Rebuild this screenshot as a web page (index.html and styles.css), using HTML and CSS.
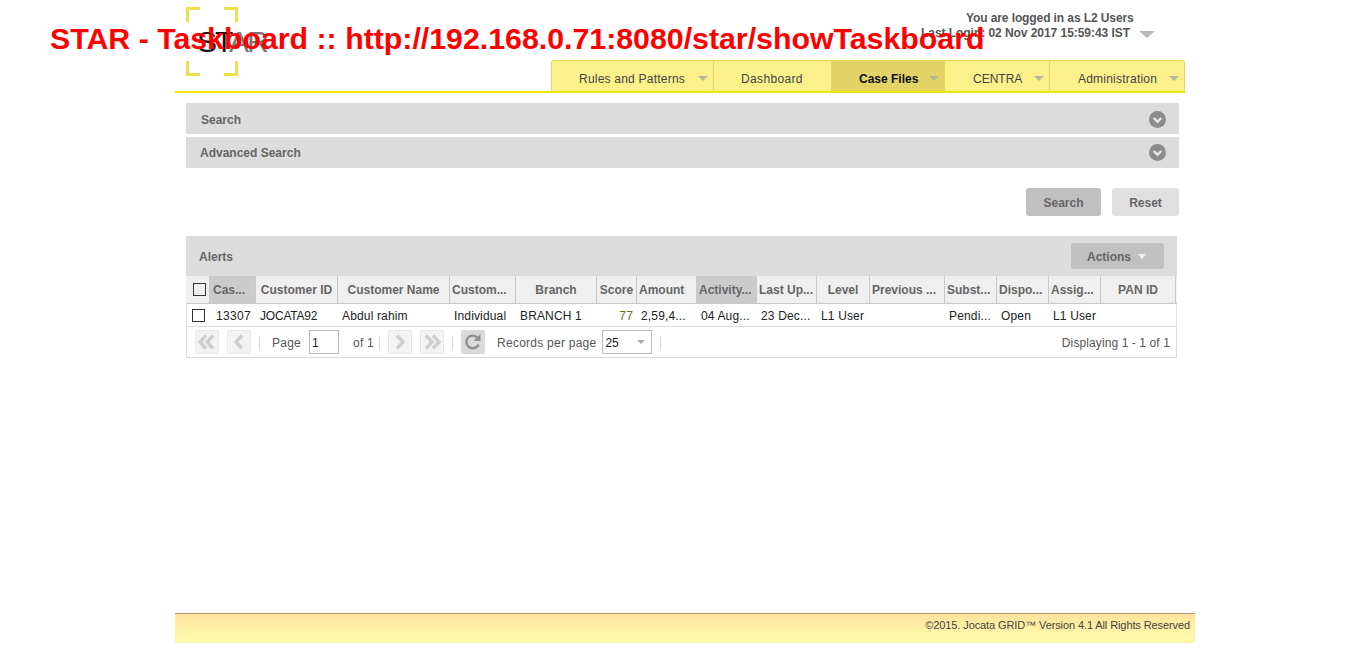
FILE: index.html
```html
<!DOCTYPE html>
<html lang="en">
<head>
<meta charset="utf-8">
<title>STAR - Taskboard</title>
<link rel="stylesheet" href="styles.css">
</head>
<body>
<div class="banner">STAR - Taskboard :: http://192.168.0.71:8080/star/showTaskboard</div>
<div class="page">
  <header class="header">
    <div class="logo">
      <svg class="logo-frame" width="52" height="69" viewBox="0 0 52 69" aria-hidden="true">
        <path d="M1.500 15V1.500H14M38 1.500H50.500V15M1.500 54V67.500H14M38 67.500H50.500V54" fill="none" stroke="#efe04f" stroke-width="3"/>
      </svg>
      <span class="logo-text"><b>ST</b>AR</span>
    </div>
    <div class="header-right">
      <div class="user">
        <div class="user-line">You are logged in as L2 Users</div>
        <div class="user-line login">Last Login: 02 Nov 2017 15:59:43 IST <i class="user-caret"></i></div>
      </div>
      <nav class="nav">
        <a class="tab t1">Rules and Patterns<i class="caret"></i></a>
        <a class="tab t2">Dashboard</a>
        <a class="tab t3 active">Case Files<i class="caret"></i></a>
        <a class="tab t4">CENTRA<i class="caret"></i></a>
        <a class="tab t5">Administration<i class="caret"></i></a>
      </nav>
    </div>
  </header>

  <main class="content">
    <section class="accordion first">
      <span class="acc-title indent">Search</span>
      <svg class="chev" width="17" height="17" viewBox="0 0 17 17" aria-hidden="true"><circle cx="8.500" cy="8.500" r="8.500" fill="#8c8c8c"/><path d="M4.800 7l3.700 3.700L12.200 7" fill="none" stroke="#e6e6e6" stroke-width="2.400"/></svg>
    </section>
    <section class="accordion second">
      <span class="acc-title">Advanced Search</span>
      <svg class="chev" width="17" height="17" viewBox="0 0 17 17" aria-hidden="true"><circle cx="8.500" cy="8.500" r="8.500" fill="#8c8c8c"/><path d="M4.800 7l3.700 3.700L12.200 7" fill="none" stroke="#e6e6e6" stroke-width="2.400"/></svg>
    </section>
    <div class="buttons">
      <button class="btn btn-dark">Search</button>
      <button class="btn btn-light">Reset</button>
    </div>

    <section class="grid-panel">
      <div class="panel-head">
        <span class="panel-title">Alerts</span>
        <button class="actions">Actions<i class="actions-caret"></i></button>
      </div>
      <div class="row head-row">
        <div class="hc chk"><span class="box"></span></div>
        <div class="hc sorted left wide">Cas...</div>
        <div class="hc">Customer ID</div>
        <div class="hc">Customer Name</div>
        <div class="hc left">Custom...</div>
        <div class="hc">Branch</div>
        <div class="hc">Score</div>
        <div class="hc left">Amount</div>
        <div class="hc sorted left">Activity...</div>
        <div class="hc left">Last Up...</div>
        <div class="hc">Level</div>
        <div class="hc left">Previous ...</div>
        <div class="hc left">Subst...</div>
        <div class="hc left">Dispo...</div>
        <div class="hc left">Assig...</div>
        <div class="hc">PAN ID</div>
      </div>
      <div class="row data-row">
        <div class="dc chk"><span class="box"></span></div>
        <div class="dc first-cell">13307</div>
        <div class="dc tight">JOCATA92</div>
        <div class="dc">Abdul rahim</div>
        <div class="dc">Individual</div>
        <div class="dc">BRANCH 1</div>
        <div class="dc score">77</div>
        <div class="dc">2,59,4...</div>
        <div class="dc">04 Aug...</div>
        <div class="dc">23 Dec...</div>
        <div class="dc">L1 User</div>
        <div class="dc"></div>
        <div class="dc">Pendi...</div>
        <div class="dc">Open</div>
        <div class="dc">L1 User</div>
        <div class="dc"></div>
      </div>
      <div class="pager">
        <span class="pg-btn"><svg width="20" height="16" viewBox="0 0 20 16"><path d="M9 1.500L3 8l6 6.500M16 1.500L10 8l6 6.500" fill="none" stroke="#cfcfcf" stroke-width="3.500"/></svg></span>
        <span class="pg-btn gap"><svg width="20" height="16" viewBox="0 0 20 16"><path d="M13 1.500L7 8l6 6.500" fill="none" stroke="#cfcfcf" stroke-width="3.500"/></svg></span>
        <span class="sep sep-first"></span>
        <span class="pg-text pg-label">Page</span>
        <span class="pg-input">1</span>
        <span class="pg-text pg-of">of 1</span>
        <span class="sep sep-of"></span>
        <span class="pg-btn"><svg width="20" height="16" viewBox="0 0 20 16"><path d="M7 1.500L13 8l-6 6.500" fill="none" stroke="#cfcfcf" stroke-width="3.500"/></svg></span>
        <span class="pg-btn gap"><svg width="20" height="16" viewBox="0 0 20 16"><path d="M4 1.500L10 8l-6 6.500M11 1.500L17 8l-6 6.500" fill="none" stroke="#cfcfcf" stroke-width="3.500"/></svg></span>
        <span class="sep"></span>
        <span class="pg-btn refresh"><svg width="18" height="18" viewBox="0 0 18 18"><path d="M14.500 11.500A6.300 6.300 0 1 1 13.200 4.500" fill="none" stroke="#8f8f8f" stroke-width="2.400"/><path d="M16.500 1v7h-7z" fill="#8f8f8f"/></svg></span>
        <span class="pg-text pg-rpp">Records per page</span>
        <span class="pg-select">25<i class="sel-caret"></i></span>
        <span class="sep"></span>
        <span class="pg-text pg-info">Displaying 1 - 1 of 1</span>
      </div>
    </section>
  </main>

  <footer class="footer">©2015. Jocata GRID™ Version 4.1 All Rights Reserved</footer>
</div>
</body>
</html>
```

FILE: styles.css
```css
* { box-sizing: border-box; }
html, body { margin: 0; height: 100%; }
body {
  background: #fff;
  font-family: "Liberation Sans", Arial, sans-serif;
  font-size: 12px;
  color: #333;
  overflow: hidden;
}
.banner {
  position: absolute;
  left: 50px;
  top: 21px;
  font-size: 30.300px;
  line-height: 36px;
  font-weight: bold;
  color: #f00;
  white-space: nowrap;
  z-index: 5;
}
.page {
  width: 1020px;
  margin-left: 175px;
  height: 658px;
  display: flex;
  flex-direction: column;
}
.header {
  width: 1010px;
  height: 93px;
  border-bottom: 2px solid #f2e600;
  display: flex;
  justify-content: space-between;
  flex: none;
}
.logo {
  position: relative;
  width: 100px;
  margin-left: 10px;
  padding-top: 7px;
}
.logo-frame { display: block; margin-left: 1px; }
.logo-text {
  position: absolute;
  left: 12px;
  top: 26px;
  font-size: 30px;
  line-height: 32px;
  color: #777;
  letter-spacing: -2px;
  font-weight: normal;
}
.logo-text b { font-weight: normal; color: #111; }
.header-right {
  width: 634px;
  display: flex;
  flex-direction: column;
  align-items: flex-end;
}
.user {
  height: 60px;
  width: 100%;
  position: relative;
  color: #555;
  font-weight: bold;
  letter-spacing: -.05px;
}
.user-line { position: absolute; white-space: nowrap; line-height: 14px; }
.user-line:first-child { left: 415px; top: 11px; letter-spacing: -.1px; }
.login { left: 370px; top: 26px; }
.user-caret {
  display: inline-block;
  margin-left: 6px;
  border-left: 8px solid transparent;
  border-right: 8px solid transparent;
  border-top: 7px solid #b9b9b9;
  vertical-align: -1px;
}
.nav {
  display: flex;
  width: 634px;
  height: 31px;
  background: #fcf08a;
  border: 1px solid #e4d65e;
  border-bottom: 0;
  border-radius: 3px 3px 0 0;
}
.tab {
  position: relative;
  display: block;
  height: 100%;
  padding-top: 11px;
  line-height: 14px;
  color: #444;
  border-right: 1px solid #e4d65e;
  white-space: nowrap;
  letter-spacing: .22px;
}
.tab:last-child { border-right: 0; }
.t1 { width: 162px; padding-left: 27px; }
.t2 { width: 118px; padding-left: 27px; letter-spacing: .35px; }
.t3 { width: 113px; padding-left: 27px; letter-spacing: 0; }
.t4 { width: 105px; padding-left: 28px; letter-spacing: 0; }
.t5 { width: 134px; padding-left: 28px; }
.active { background: #e3d366; color: #111; font-weight: bold; }
.caret {
  position: absolute;
  right: 5px;
  top: 15px;
  border-left: 5px solid transparent;
  border-right: 5px solid transparent;
  border-top: 5px solid #b5b5a0;
}
.content { flex: 1; padding: 10px 0 0 11px; }
.accordion {
  width: 993px;
  background: #dcdcdc;
  display: flex;
  align-items: center;
  justify-content: space-between;
  font-weight: bold;
  color: #666;
  padding: 0 13px 0 14px;
}
.first { height: 31px; margin-bottom: 3px; padding-top: 2px; }
.second { height: 31px; }
.acc-title.indent { margin-left: 1px; }
.chev { display: block; }
.buttons {
  width: 993px;
  display: flex;
  justify-content: flex-end;
  gap: 11px;
  margin-top: 20px;
}
.btn {
  height: 28px;
  border: 0;
  border-radius: 3px;
  font: bold 12px "Liberation Sans", Arial, sans-serif;
  color: #666;
  padding: 2px 0 0;
}
.btn-dark { width: 75px; background: #c0c0c0; }
.btn-light { width: 67px; background: #e0e0e0; }
.grid-panel { width: 991px; margin-top: 20px; }
.panel-head {
  height: 40px;
  background: #dcdcdc;
  display: flex;
  align-items: center;
  justify-content: space-between;
  padding: 0 13px;
  font-weight: bold;
  color: #666;
}
.panel-title { padding-top: 2px; }
.actions {
  width: 93px;
  height: 26px;
  border: 0;
  border-radius: 3px;
  background: #c0c0c0;
  font: bold 12px "Liberation Sans", Arial, sans-serif;
  color: #666;
  padding: 2px 2px 0 0;
}
.actions-caret {
  display: inline-block;
  margin-left: 7px;
  border-left: 4.500px solid transparent;
  border-right: 4.500px solid transparent;
  border-top: 5px solid #f2f2f2;
  vertical-align: 2px;
}
.row {
  display: grid;
  grid-template-columns: 24px 46px 82px 112px 66px 81px 40px 60px 60px 60px 53px 75px 52px 52px 52px 75px;
}
.head-row {
  height: 28px;
  background: #efefef;
  border-bottom: 1px solid #c8c8c8;
  font-weight: bold;
  color: #666;
}
.hc {
  line-height: 29px;
  text-align: center;
  border-right: 1px solid #c8c8c8;
  white-space: nowrap;
  overflow: hidden;
}
.left { text-align: left; padding-left: 2px; }
.wide { padding-left: 3px; }
.sorted { background: #cbcbcb; }
.chk { display: flex; align-items: center; padding-left: 7px; }
.box { width: 13px; height: 13px; border: 1px solid #333; background: #fff; display: block; }
.head-row .box { background: #efefef; }
.data-row {
  height: 23px;
  border-left: 1px solid #e2e2e2;
  border-right: 1px solid #e2e2e2;
  border-bottom: 1px solid #ddd;
  color: #222;
}
.dc {
  line-height: 24px;
  padding-left: 3px;
  white-space: nowrap;
  overflow: hidden;
  letter-spacing: .15px;
}
.data-row .chk { padding-left: 5px; padding-top: 1px; }
.first-cell { padding-left: 5px; letter-spacing: .3px; }
.tight { letter-spacing: -.2px; }
.score { color: #7a6a1f; text-align: right; padding-right: 5px; }
.pager {
  height: 31px;
  border: 1px solid #ddd;
  border-top: 0;
  display: flex;
  align-items: center;
  padding-left: 8px;
  color: #555;
}
.pg-text { padding-top: 2px; letter-spacing: .25px; white-space: nowrap; }
.pg-btn {
  width: 24px;
  height: 24px;
  background: #f3f3f3;
  border: 1px solid #e8e8e8;
  border-radius: 2px;
  display: flex;
  align-items: center;
  justify-content: center;
  flex: none;
}
.pg-btn.gap { margin-left: 8px; }
.sep { width: 1px; height: 13px; background: #d8d8d8; margin: 0 8px; flex: none; }
.sep-first { margin-right: 12px; }
.sep-of { margin-left: 5px; }
.pg-label { margin-right: 8px; }
.pg-input {
  width: 30px;
  height: 24px;
  border: 1px solid #bbb;
  line-height: 24px;
  padding-left: 2px;
  color: #222;
  margin-right: 14px;
}
.refresh { background: #dadada; border-color: #dadada; }
.pg-rpp { margin-left: 12px; margin-right: 6px; }
.pg-select {
  position: relative;
  width: 50px;
  height: 24px;
  border: 1px solid #bbb;
  line-height: 24px;
  padding-left: 2px;
  color: #222;
}
.sel-caret {
  position: absolute;
  right: 6px;
  top: 9px;
  border-left: 4.500px solid transparent;
  border-right: 4.500px solid transparent;
  border-top: 4px solid #aaa;
}
.pg-info { margin-left: auto; padding-right: 6px; letter-spacing: .1px; }
.footer {
  flex: none;
  height: 30px;
  margin-bottom: 15px;
  border-top: 1px solid #b39a6a;
  background: linear-gradient(#fde29c, #fff4a6 60%, #fff8ab);
  text-align: right;
  font-size: 11px;
  line-height: 23px;
  padding-right: 5px;
  color: #444;
  letter-spacing: -.1px;
}
```
